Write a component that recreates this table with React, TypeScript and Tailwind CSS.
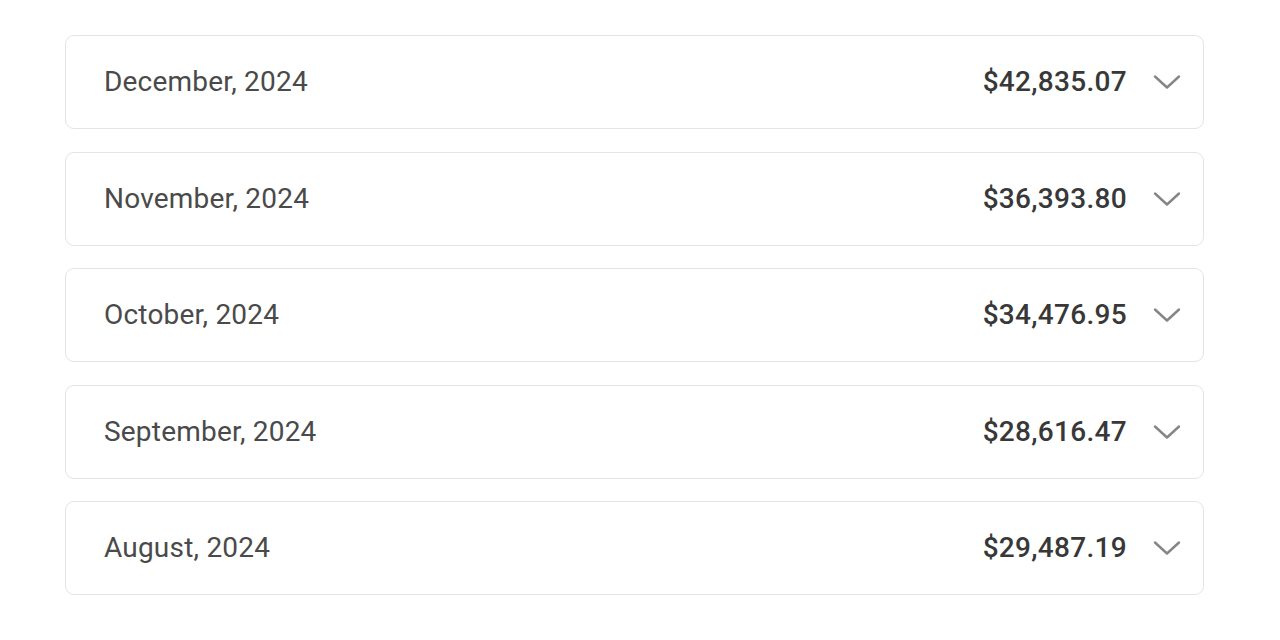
const months = [
  { label: "December, 2024", total: "$42,835.07" },
  { label: "November, 2024", total: "$36,393.80" },
  { label: "October, 2024", total: "$34,476.95" },
  { label: "September, 2024", total: "$28,616.47" },
  { label: "August, 2024", total: "$29,487.19" },
];

function Chevron() {
  return (
    <svg width="28" height="16" viewBox="0 0 28 16" fill="none" className="text-[#858585]">
      <path d="M2 2.5L14 13.5L26 2.5" stroke="currentColor" strokeWidth="2.4" strokeLinecap="round" strokeLinejoin="round" />
    </svg>
  );
}

export default function App() {
  return (
    <div
      className="w-[1280px] h-[640px] bg-white pt-[35px] px-[65px] overflow-hidden"
      style={{ fontFamily: "Roboto, 'Liberation Sans', sans-serif" }}
    >
      <div className="flex flex-col gap-[22.5px] w-[1139px]">
        {months.map((m) => (
          <div
            key={m.label}
            className="flex items-center justify-between h-[94px] rounded-[9px] border border-[#e4e4e4] bg-white pl-[38px] pr-[22px]"
          >
            <span className="text-[28px] text-[#4a4a4a] tracking-[0.2px]">{m.label}</span>
            <div className="flex items-center gap-[26px]">
              <span className="text-[28px] font-medium text-[#383838] tracking-[0.3px]">{m.total}</span>
              <Chevron />
            </div>
          </div>
        ))}
      </div>
    </div>
  );
}
